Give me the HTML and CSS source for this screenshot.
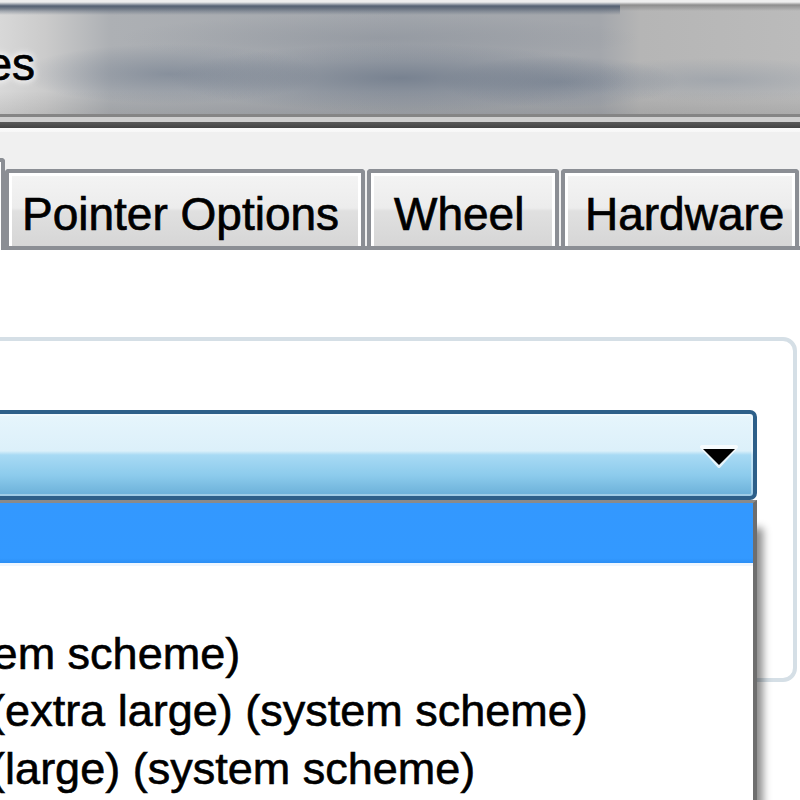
FILE: index.html
```html
<!DOCTYPE html>
<html>
<head>
<meta charset="utf-8">
<title>Mouse Properties</title>
<link rel="stylesheet" href="styles.css">
</head>
<body>
<div class="titlebar">
  <div class="title"><span class="title-text">Mouse Properties</span></div>
</div>
<div class="frame-edge"></div>
<div class="tabstrip">
  <div class="tab tab-sel"></div>
  <div class="tab tab-po">Pointer Options</div>
  <div class="tab tab-wheel">Wheel</div>
  <div class="tab tab-hw">Hardware</div>
</div>
<div class="page">
  <div class="group">
    <div class="combo">
      <span class="combo-text">(None)</span>
      <svg class="arrow" width="40" height="26" viewBox="0 0 40 26">
        <polygon points="3,3 37,3 20,22" fill="#ffffff" opacity="0.75" stroke="#ffffff" stroke-width="4" stroke-linejoin="round"/>
        <polygon points="4,5 36,5 20,21" fill="#000000"/>
      </svg>
      <ul class="droplist">
        <li class="item selected">(None)</li>
        <li class="item">&nbsp;</li>
        <li class="item">Magnified (system scheme)</li>
        <li class="item">Windows Aero (extra large) (system scheme)</li>
        <li class="item">Windows Aero (large) (system scheme)</li>
        <li class="item">Windows Aero (system scheme)</li>
      </ul>
    </div>
  </div>
</div>
</body>
</html>
```
FILE: styles.css
```css
html, body {
  margin: 0;
  padding: 0;
}
body {
  width: 800px;
  height: 800px;
  overflow: hidden;
  background: #f0f0f0;
  font-family: "Liberation Sans", Arial, sans-serif;
  color: #000;
}

/* ---------- title bar ---------- */
.titlebar {
  height: 114px;
  background:
    linear-gradient(to bottom, #eeeeee 0, #eeeeee 2px, rgba(78, 92, 112, 0.9) 6px, rgba(78, 92, 112, 0) 15px) 0 0 / 620px 100% no-repeat,
    linear-gradient(to bottom, #efefef 0, #efefef 2px, #8d8d8d 5px, rgba(141, 141, 141, 0) 11px),
    radial-gradient(ellipse 230px 34px at 400px 78px, rgba(92, 106, 126, 0.6), rgba(92, 106, 126, 0)),
    radial-gradient(ellipse 150px 30px at 170px 74px, rgba(100, 114, 134, 0.5), rgba(100, 114, 134, 0)),
    radial-gradient(ellipse 120px 26px at 560px 82px, rgba(100, 114, 134, 0.45), rgba(100, 114, 134, 0)),
    radial-gradient(ellipse 160px 22px at 720px 80px, rgba(120, 134, 152, 0.35), rgba(120, 134, 152, 0)),
    radial-gradient(ellipse 260px 24px at 380px 38px, rgba(120, 128, 140, 0.3), rgba(120, 128, 140, 0)),
    linear-gradient(to bottom, rgba(0, 0, 0, 0) 80%, rgba(60, 60, 60, 0.12) 100%),
    linear-gradient(to right, #d8d8d8 0, #cbcbcb 45px, #adb0b4 110px, #a2a6ac 400px, #a4a7ac 600px, #b5b5b5 640px, #bbbbbb 800px);
}
.title {
  width: 35px;
  display: flex;
  justify-content: flex-end;
  padding-top: 38px;
  font-size: 46px;
  line-height: 52px;
  white-space: nowrap;
}
.title-text {
  flex: none;
  -webkit-text-stroke: 0.7px #000;
  text-shadow: 0 0 6px #ffffff, 0 0 10px #ffffff;
}
.frame-edge {
  height: 18px;
  background: linear-gradient(to bottom,
    #858585 0, #858585 3px,
    #cfcfcf 3px, #cfcfcf 8px,
    #5a5a5a 8px, #444444 14px,
    #fbfbfb 14px, #f7f7f7 18px);
}

/* ---------- tabs ---------- */
.tabstrip {
  display: flex;
  align-items: flex-end;
  gap: 2px;
  padding-top: 26px;
  white-space: nowrap;
}
.tab {
  flex: none;
  box-sizing: border-box;
  height: 77px;
  border: 4px solid #8b8e94;
  border-bottom: none;
  border-radius: 4px 4px 0 0;
  box-shadow: inset 3px 3px 0 #ffffff, inset -3px 0 0 #ffffff;
  background: linear-gradient(to bottom, #f4f4f4 0, #ececec 48%, #e0e0e0 52%, #d6d6d6 100%);
  font-size: 46px;
  line-height: 52px;
  padding-top: 15px;
  -webkit-text-stroke: 0.7px #000;
}
.tab-sel {
  width: 5px;
  height: 92px;
  margin-bottom: -4px;
  border-left: none;
  border-radius: 0 4px 0 0;
  background: #ffffff;
  box-shadow: none;
  margin-right: -2px;
}
.tab-po {
  width: 360px;
  padding-left: 13px;
}
.tab-wheel {
  width: 192px;
  padding-left: 23px;
}
.tab-hw {
  width: 238px;
  padding-left: 20px;
}

/* ---------- page ---------- */
.page {
  background: #ffffff;
  border-top: 4px solid #8b8e94;
  height: 560px;
  padding-top: 87px;
  box-sizing: border-box;
}
.group {
  margin: 0 3px 0 -340px;
  height: 345px;
  box-sizing: border-box;
  border: 4px solid #d5dfe6;
  border-radius: 14px;
  padding-top: 69px;
}
.combo {
  position: relative;
  margin: 0 36px 0 6px;
  height: 90px;
  box-sizing: border-box;
  border: 4px solid #2d5f89;
  border-radius: 7px;
  background: linear-gradient(to bottom, #e6f5fc 0, #dcf0fa 45%, #a8daf4 50%, #8ccbec 75%, #6aafd8 100%);
  box-shadow: inset 0 0 0 2px rgba(255, 255, 255, 0.35);
  display: flex;
  align-items: center;
  justify-content: space-between;
  padding: 4px 14px 0 24px;
  font-size: 45px;
}
.combo-text {
  white-space: nowrap;
}
.arrow {
  display: block;
  flex: none;
}

/* ---------- dropdown list (overlay) ---------- */
.droplist {
  position: absolute;
  left: -4px;
  right: -4px;
  top: calc(100% + 4px);
  margin: 0;
  padding: 0;
  list-style: none;
  background: #ffffff;
  border: 4px solid #6e6e6e;
  border-top-width: 3px;
  border-top-color: #8a8a8a;
  box-shadow: 8px 26px 8px -2px rgba(0, 0, 0, 0.45);
}
.item {
  box-sizing: border-box;
  height: 57.5px;
  padding-top: 8px;
  line-height: 49.5px;
  padding-left: 16px;
  font-size: 45px;
  white-space: nowrap;
  -webkit-text-stroke: 0.6px #000;
}
.item.selected {
  height: 60px;
  background: linear-gradient(to bottom, #3398ff 0, #3399ff 92%, #2a8ef5 100%);
  color: #ffffff;
  -webkit-text-stroke: 0.6px #fff;
  box-shadow: 0 3px 0 #eef6ff;
}
```
